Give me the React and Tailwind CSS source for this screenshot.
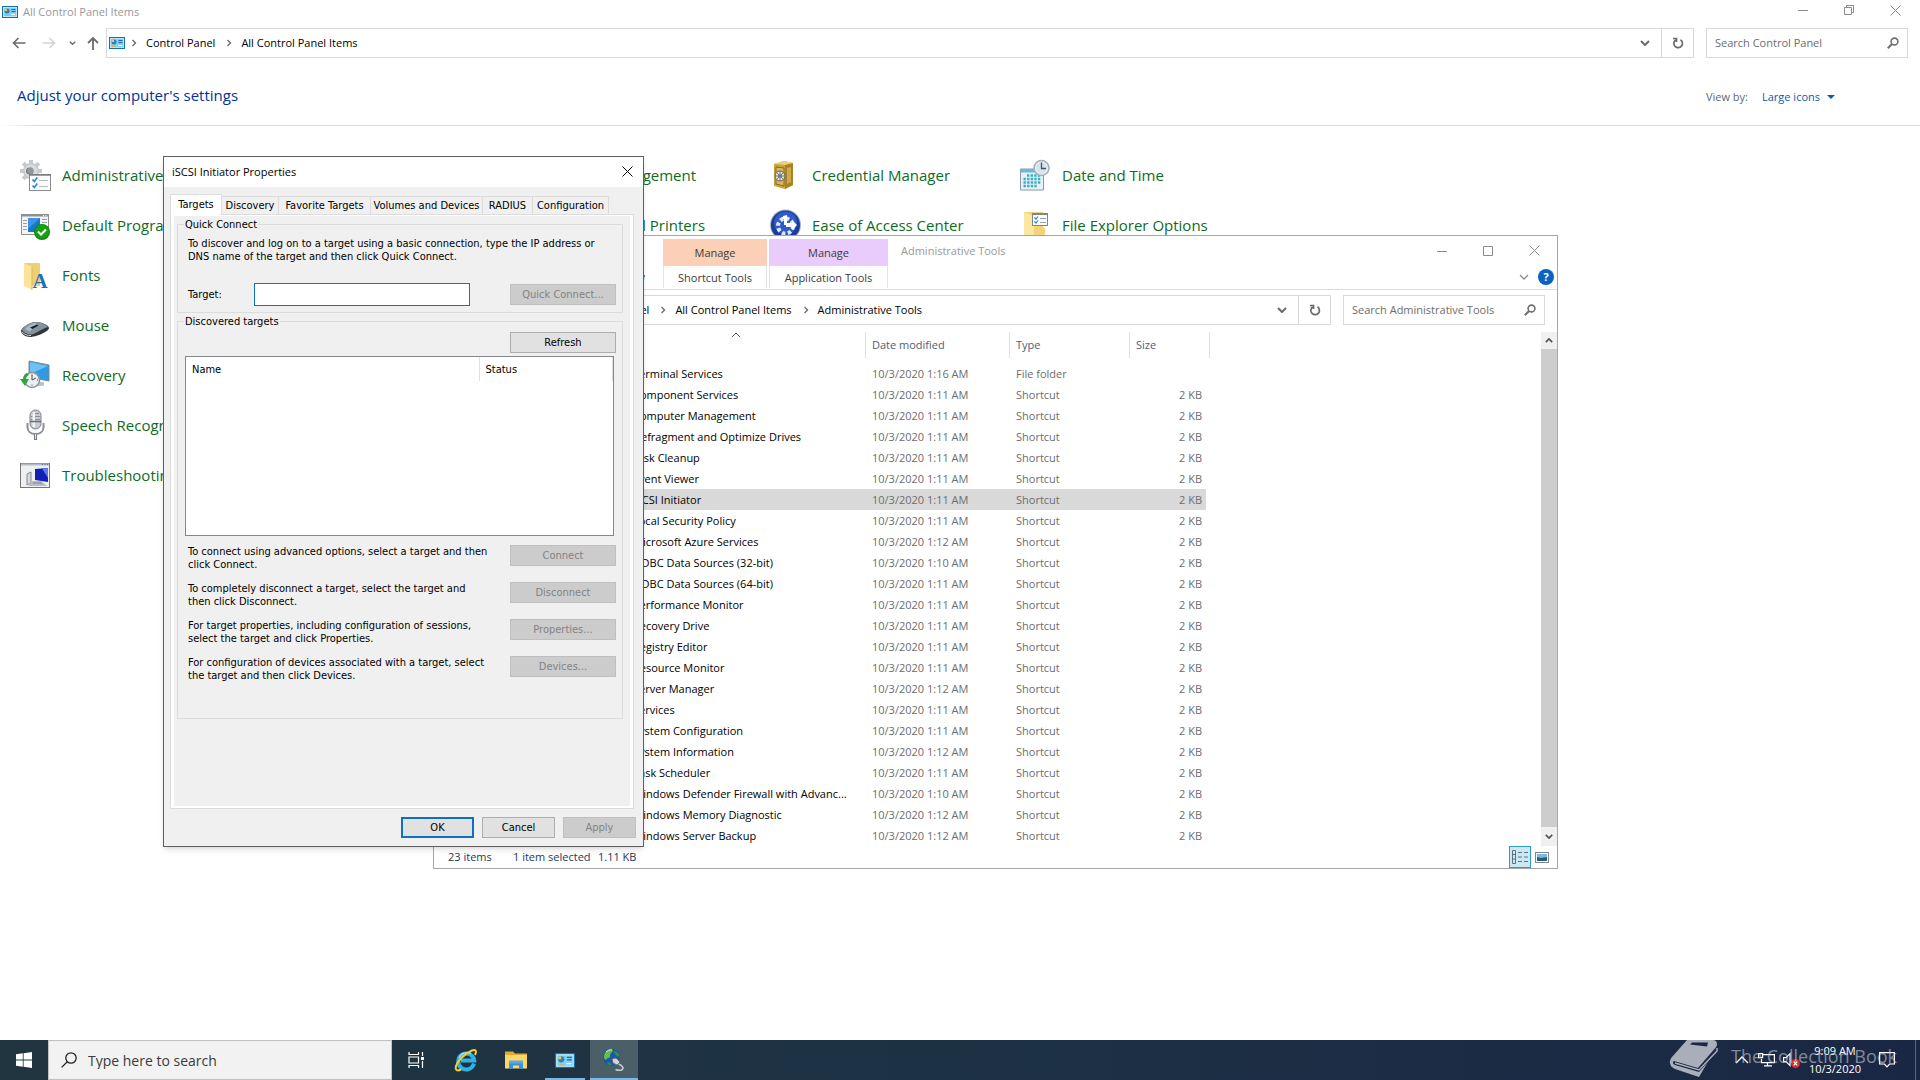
import { useState } from 'react';

const tools = [
  ['Terminal Services', '10/3/2020 1:16 AM', 'File folder', ''],
  ['Component Services', '10/3/2020 1:11 AM', 'Shortcut', '2 KB'],
  ['Computer Management', '10/3/2020 1:11 AM', 'Shortcut', '2 KB'],
  ['Defragment and Optimize Drives', '10/3/2020 1:11 AM', 'Shortcut', '2 KB'],
  ['Disk Cleanup', '10/3/2020 1:11 AM', 'Shortcut', '2 KB'],
  ['Event Viewer', '10/3/2020 1:11 AM', 'Shortcut', '2 KB'],
  ['iSCSI Initiator', '10/3/2020 1:11 AM', 'Shortcut', '2 KB'],
  ['Local Security Policy', '10/3/2020 1:11 AM', 'Shortcut', '2 KB'],
  ['Microsoft Azure Services', '10/3/2020 1:12 AM', 'Shortcut', '2 KB'],
  ['ODBC Data Sources (32-bit)', '10/3/2020 1:10 AM', 'Shortcut', '2 KB'],
  ['ODBC Data Sources (64-bit)', '10/3/2020 1:11 AM', 'Shortcut', '2 KB'],
  ['Performance Monitor', '10/3/2020 1:11 AM', 'Shortcut', '2 KB'],
  ['Recovery Drive', '10/3/2020 1:11 AM', 'Shortcut', '2 KB'],
  ['Registry Editor', '10/3/2020 1:11 AM', 'Shortcut', '2 KB'],
  ['Resource Monitor', '10/3/2020 1:11 AM', 'Shortcut', '2 KB'],
  ['Server Manager', '10/3/2020 1:12 AM', 'Shortcut', '2 KB'],
  ['Services', '10/3/2020 1:11 AM', 'Shortcut', '2 KB'],
  ['System Configuration', '10/3/2020 1:11 AM', 'Shortcut', '2 KB'],
  ['System Information', '10/3/2020 1:12 AM', 'Shortcut', '2 KB'],
  ['Task Scheduler', '10/3/2020 1:11 AM', 'Shortcut', '2 KB'],
  ['Windows Defender Firewall with Advanc...', '10/3/2020 1:10 AM', 'Shortcut', '2 KB'],
  ['Windows Memory Diagnostic', '10/3/2020 1:12 AM', 'Shortcut', '2 KB'],
  ['Windows Server Backup', '10/3/2020 1:12 AM', 'Shortcut', '2 KB'],
];

const actions = [
  ['To connect using advanced options, select a target and then', 'click Connect.', 'Connect'],
  ['To completely disconnect a target, select the target and', 'then click Disconnect.', 'Disconnect'],
  ['For target properties, including configuration of sessions,', 'select the target and click Properties.', 'Properties...'],
  ['For configuration of devices associated with a target, select', 'the target and then click Devices.', 'Devices...'],
];

/* ---------- small glyphs ---------- */

function PanelIcon({ className }) {
  return (
    <svg viewBox="0 0 16 12" className={className}>
      <rect x="0.5" y="0.5" width="15" height="11" fill="#7fd0f5" stroke="#1b6fa8" />
      <rect x="1.5" y="1.5" width="13" height="9" fill="none" stroke="#b9e6fb" />
      <circle cx="5" cy="5" r="2.5" fill="#2e7dbd" />
      <path d="M5 5V2.5A2.5 2.5 0 0 0 2.5 5z" fill="#f6c945" />
      <path d="M9.5 3.5h4M9.5 5.5h4" stroke="#1f66a0" />
      <path d="M3 9.5h4" stroke="#e9a33a" />
      <path d="M9 8.5h4" stroke="#fff" />
    </svg>
  );
}

function Crumb() {
  return (
    <svg viewBox="0 0 6 8" className="mx-[6px] h-2 w-[6px]" fill="none" stroke="#6b6b6b" strokeWidth="1.4">
      <path d="M1.5 1l3 3-3 3" />
    </svg>
  );
}

function Chevron({ className }) {
  return (
    <svg viewBox="0 0 10 6" className={className} fill="none" stroke="currentColor" strokeWidth="2">
      <path d="M1 1l4 4 4-4" />
    </svg>
  );
}

function MagnifierIcon() {
  return (
    <svg viewBox="0 0 12 12" className="h-3 w-3 shrink-0" fill="none" stroke="#707070">
      <circle cx="7.5" cy="4.5" r="3.4" strokeWidth="1.6" />
      <path d="M5 7L.8 11.2" strokeWidth="2" />
    </svg>
  );
}

function CloseGlyph() {
  return (
    <svg viewBox="0 0 11 11" className="h-[11px] w-[11px]" fill="none" stroke="currentColor">
      <path d="M.5.5l10 10M10.5.5l-10 10" />
    </svg>
  );
}

function WindowButtons({ restore }) {
  return (
    <div className="flex text-[#8c8c8c]">
      <button aria-label="Minimize" className="flex w-[46px] items-center justify-center">
        <svg viewBox="0 0 10 10" className="h-[10px] w-[10px]" stroke="currentColor"><path d="M0 5.5h10" /></svg>
      </button>
      <button aria-label="Maximize" className="flex w-[46px] items-center justify-center">
        <svg viewBox="0 0 10 10" className="h-[10px] w-[10px]" fill="none" stroke="currentColor">
          {restore ? <path d="M.5 2.5h7v7h-7zM2.5 2.5v-2h7v7h-2" /> : <path d="M.5.5h9v9h-9z" />}
        </svg>
      </button>
      <button aria-label="Close" className="flex w-[46px] items-center justify-center"><CloseGlyph /></button>
    </div>
  );
}

/* ---------- control panel icons ---------- */

function AdminToolsIcon() {
  return (
    <svg viewBox="0 0 32 32" className="h-8 w-8">
      <g fill="#c3c9ce">
        <circle cx="11" cy="12" r="8" />
        <g stroke="#c3c9ce" strokeWidth="4">
          <path d="M11 1v22M0 12h22M3.2 4.2l15.6 15.6M18.8 4.2L3.2 19.8" />
        </g>
      </g>
      <circle cx="11" cy="12" r="6.5" fill="#d8dcdf" />
      <circle cx="10" cy="12" r="3.8" fill="#8f979d" />
      <path d="M8 9a4 4 0 0 0 0 6" stroke="#6c7479" fill="none" />
      <rect x="9.5" y="15.5" width="21" height="16" fill="#fbfbfb" stroke="#8c8c8c" />
      <path d="M9 16h22" stroke="#777" strokeWidth="1.4" />
      <path d="M12.5 20.5l1.8 2 3-4M12.5 26.5l1.8 2 3-4" fill="none" stroke="#2a86d8" strokeWidth="1.6" />
      <path d="M19 21.5h9M19 27.5h9" stroke="#b5bcc2" />
    </svg>
  );
}

function DefaultProgramsIcon() {
  return (
    <svg viewBox="0 0 32 32" className="h-8 w-8">
      <rect x="1.5" y="5.5" width="27" height="20" fill="#f4f4f4" stroke="#8a9094" />
      <path d="M1 6.5h28" stroke="#8a9094" strokeWidth="2" />
      <path d="M23 6.5h1M25.5 6.5h1" stroke="#fff" />
      <path d="M3 11.5h4M3 14.5h4M3 17.5h4M3 20.5h4M22 10.5h5M22 13.5h5" stroke="#9aa0a4" />
      <rect x="8" y="9" width="12" height="14" fill="#1976d2" />
      <path d="M8 9h12L8 20z" fill="#3d94e6" />
      <circle cx="22" cy="23" r="8" fill="#11850f" />
      <circle cx="22" cy="22.5" r="7" fill="#17a012" />
      <path d="M18 22.5l3 3 5-5" fill="none" stroke="#fff" strokeWidth="2" />
    </svg>
  );
}

function FontsIcon() {
  return (
    <svg viewBox="0 0 32 32" className="h-8 w-8 overflow-visible">
      <path d="M4 4h15a1 1 0 0 1 1 1v22H7z" fill="#f0cf74" />
      <path d="M4 4l8 4v23l-8-4z" fill="#fbe39a" />
      <path d="M12 8v23" stroke="#dfb95c" />
      <text x="12.5" y="29" fontSize="21" fontWeight="700" fontFamily="Liberation Serif, serif" fill="#1f6fb5">A</text>
    </svg>
  );
}

function MouseIcon() {
  return (
    <svg viewBox="0 0 32 32" className="h-8 w-8">
      <path d="M1 22c0-3 9-9 15-9 5 0 13 3 13 6 0 4-14 9-19 9-4 0-9-3-9-6z" fill="#32373c" />
      <path d="M2 20.5c3-4 9-8 14-7.5 4 .3 11 2.5 12 5-5 1-11 6-16 7.5C8 25.5 3 23.5 2 20.5z" fill="#8593a1" />
      <path d="M5 20c3-3 7-5.5 10-6l3 2c-4 1.5-6 4-8 6.5z" fill="#aebac5" />
      <path d="M10 18.5l7-3 1.5 1-6 3.5z" fill="#1e2226" />
      <path d="M2 23c3 3 6 3.5 9 3.5" stroke="#cfd5da" fill="none" />
    </svg>
  );
}

function RecoveryIcon() {
  return (
    <svg viewBox="0 0 32 32" className="h-8 w-8">
      <path d="M9 2l20 4v16L9 18z" fill="#2f9be4" stroke="#7c8891" />
      <path d="M10 3l18 4-18 8z" fill="#6cc1f6" />
      <path d="M16 22l8 1.5v3l-8 1z" fill="#b8bfc4" />
      <circle cx="12" cy="21" r="7.5" fill="#eceff1" stroke="#8d969c" strokeWidth="1.6" />
      <path d="M12 16v5l4-2" stroke="#4a5257" fill="none" />
      <path d="M12 15.5v1M12 25.5v1M17 21h1" stroke="#4a5257" />
      <path d="M7 14c-3 1-4 4-4 6H0l5 7 4-7H6c0-2 1-3 3-4z" fill="#2fa63a" />
    </svg>
  );
}

function MicIcon() {
  return (
    <svg viewBox="0 0 32 32" className="h-8 w-8">
      <rect x="10" y="1" width="11" height="19" rx="5.5" fill="#c9ccd1" stroke="#7b7f87" />
      <path d="M12 4.5h7M11 7.5h9M11 10.5h9" stroke="#8b9098" />
      <rect x="12.5" y="3" width="2.5" height="15" fill="#f2f3f5" />
      <path d="M10 12.5h11" stroke="#666b73" strokeWidth="1.5" />
      <path d="M7.5 14v4c0 4.5 3.5 7 8 7s8-2.5 8-7v-4" fill="none" stroke="#8b9098" strokeWidth="2" />
      <path d="M15.5 25v6" stroke="#777c84" strokeWidth="3" />
      <path d="M15.5 25v5" stroke="#e1e3e6" />
    </svg>
  );
}

function TroubleshootIcon() {
  return (
    <svg viewBox="0 0 32 32" className="h-8 w-8">
      <rect x="0.5" y="4.5" width="29" height="24" fill="#eef0f2" stroke="#777" />
      <path d="M1 5.5h28" stroke="#b6bcc2" strokeWidth="2" />
      <path d="M22 5.5h1M24.5 5.5h1M27 5.5h1" stroke="#4c6fc0" />
      <path d="M15 10l13-1v14l-13-2z" fill="#1221b4" />
      <path d="M22 9.5l6-.5v10z" fill="#5f79e6" />
      <path d="M7 15l4-2v11l-4 2z" fill="#d8dade" stroke="#85898f" />
      <path d="M11 22h10l6 5H9z" fill="#b9bdc3" />
      <path d="M13 24h9" stroke="#7f848b" />
    </svg>
  );
}

function SafeIcon() {
  return (
    <svg viewBox="0 0 32 32" className="h-8 w-8">
      <path d="M4 5l10-3 9 2v22l-8 4-11-3z" fill="#c9a23c" />
      <path d="M15 5l8-1v22l-8 4z" fill="#a98228" />
      <path d="M4 5l10-3 9 2-8 2z" fill="#ecd07a" />
      <path d="M6 8l8 1v18l-8-2z" fill="#dcb955" stroke="#8e6a18" />
      <circle cx="10" cy="17" r="5" fill="#dfe1e2" stroke="#63604f" />
      <circle cx="10" cy="17" r="2" fill="#787c80" />
      <path d="M10 12v10M5 17h10M6.5 13.5l7 7M13.5 13.5l-7 7" stroke="#787c80" />
      <path d="M17 9l4-1v15l-4 2z" fill="#d0a94a" />
    </svg>
  );
}

function DateTimeIcon() {
  return (
    <svg viewBox="0 0 32 32" className="h-8 w-8">
      <path d="M.5 10h23v21h-23z" fill="#e8f1f5" stroke="#8a9aa5" />
      <path d="M.5 10h23v3.5H.5z" fill="#6fb7d6" />
      <g stroke="#34b1c9" strokeWidth="2.4" strokeDasharray="2.4 1.2">
        <path d="M7 16.5h14M3.5 20h18M3.500 23.500h18M3.500 27h14" />
      </g>
      <circle cx="21.500" cy="9" r="7.500" fill="#e9eff4" stroke="#a3afb9" strokeWidth="1.600" />
      <circle cx="21.500" cy="9" r="5.500" fill="#d6e2ec" />
      <path d="M21.500 3.500v6H26" stroke="#46535e" fill="none" strokeWidth="1.300" />
    </svg>
  );
}

function EaseIcon() {
  return (
    <svg viewBox="0 0 32 32" className="h-8 w-8">
      <circle cx="15.5" cy="16" r="15.5" fill="#a8afba" />
      <circle cx="15.5" cy="16" r="14.5" fill="#1d3b98" />
      <circle cx="15.5" cy="14" r="11.5" fill="#2f5bc9" />
      <circle cx="15.5" cy="17" r="7.5" fill="none" stroke="#dfe7f8" strokeWidth="4" strokeDasharray="3.5 2.4" />
      <path d="M17 16V6l-4 1v3h1v6z" fill="#fff" />
      <path d="M16 14h6v-3l5 5-5 5v-3h-6z" fill="#fff" />
    </svg>
  );
}

function FolderOptionsIcon() {
  return (
    <svg viewBox="0 0 32 32" className="h-8 w-8">
      <path d="M4 3h19v27H6z" fill="#f3d377" />
      <path d="M4 3l10 4v25L4 28z" fill="#fbe6a2" />
      <path d="M22 18c3 0 4 3 3 6l-1 8h-3z" fill="#f3d377" />
      <rect x="12.5" y="4.5" width="15" height="12" fill="#fbfbfb" stroke="#7f868c" />
      <path d="M12 5.5h16" stroke="#7f868c" />
      <path d="M14.5 8.5l1.5 1.5 2-2.5M14.5 12.5l1.5 1.5 2-2.5" stroke="#2a86d8" fill="none" strokeWidth="1.2" />
      <path d="M20 9.5h6M20 13.5h6" stroke="#9aa0a5" />
    </svg>
  );
}

const panelItems = [
  { label: 'Administrative Tools', icon: AdminToolsIcon, cell: 'col-start-1 row-start-1' },
  { label: 'Color Management', cell: 'col-start-3 row-start-1' },
  { label: 'Credential Manager', icon: SafeIcon, cell: 'col-start-4 row-start-1' },
  { label: 'Date and Time', icon: DateTimeIcon, cell: 'col-start-5 row-start-1' },
  { label: 'Default Programs', icon: DefaultProgramsIcon, cell: 'col-start-1 row-start-2' },
  { label: 'Devices and Printers', cell: 'col-start-3 row-start-2' },
  { label: 'Ease of Access Center', icon: EaseIcon, cell: 'col-start-4 row-start-2' },
  { label: 'File Explorer Options', icon: FolderOptionsIcon, cell: 'col-start-5 row-start-2' },
  { label: 'Fonts', icon: FontsIcon, cell: 'col-start-1 row-start-3' },
  { label: 'Mouse', icon: MouseIcon, cell: 'col-start-1 row-start-4' },
  { label: 'Recovery', icon: RecoveryIcon, cell: 'col-start-1 row-start-5' },
  { label: 'Speech Recognition', icon: MicIcon, cell: 'col-start-1 row-start-6' },
  { label: 'Troubleshooting', icon: TroubleshootIcon, cell: 'col-start-1 row-start-7' },
];

/* ---------- shared navigation bar ---------- */

function NavBar({ crumbs, placeholder }) {
  return (
    <div className="flex h-[30px] pr-3">
      <div className="flex w-[106px] shrink-0 items-center pl-3 text-[#6b6b6b]">
        <button aria-label="Back" className="w-[30px]">
          <svg viewBox="0 0 14 12" className="h-3 w-[14px]" fill="none" stroke="currentColor" strokeWidth="1.6"><path d="M13.5 6H1.5M6.5 1l-5 5 5 5" /></svg>
        </button>
        <button aria-label="Forward" className="w-[27px] text-[#d4d4d4]">
          <svg viewBox="0 0 14 12" className="h-3 w-[14px]" fill="none" stroke="currentColor" strokeWidth="1.6"><path d="M.5 6h12M7.5 1l5 5-5 5" /></svg>
        </button>
        <button aria-label="Recent locations" className="w-[18px]"><Chevron className="h-1 w-[7px]" /></button>
        <button aria-label="Up">
          <svg viewBox="0 0 12 14" className="h-[14px] w-3" fill="none" stroke="currentColor" strokeWidth="1.8"><path d="M6 14V2M1 7l5-5 5 5" /></svg>
        </button>
      </div>
      <nav className="flex flex-1 items-center border border-[#d9d9d9] text-[11px]">
        <PanelIcon className="ml-[2px] h-3 w-4" />
        <Crumb />
        {crumbs.map((c, i) => (
          <div key={c} className="flex items-center">
            {i > 0 && <Crumb />}
            <a href="#" className="whitespace-nowrap pl-[3px] pr-[5px] text-black">{c}</a>
          </div>
        ))}
        <button aria-label="Previous locations" className="ml-auto mr-[11px] text-[#6b6b6b]"><Chevron className="h-[6px] w-[10px]" /></button>
        <button aria-label="Refresh" className="flex w-8 items-center justify-center self-stretch border-l border-[#d9d9d9] text-[#6b6b6b]">
          <svg viewBox="0 0 12 12" className="h-3 w-3" fill="none" stroke="currentColor" strokeWidth="1.7">
            <path d="M8.5 2.8A4.3 4.3 0 1 1 3.5 3M1 1.5h3.5V5" />
          </svg>
        </button>
      </nav>
      <label className="ml-3 flex w-[202px] items-center border border-[#d9d9d9] px-2">
        <input type="text" placeholder={placeholder} aria-label={placeholder} className="min-w-0 flex-1 bg-transparent text-[11px] outline-none placeholder:text-[#6d6d6d]" />
        <MagnifierIcon />
      </label>
    </div>
  );
}

function ControlPanel() {
  return (
    <main className="flex-1">
      <header className="flex h-7 justify-between pl-[2px] pr-[2px]">
        <div className="flex h-[23px] items-center gap-[5px] text-[11px] text-[#999]">
          <PanelIcon className="h-3 w-4" />
          <span>All Control Panel Items</span>
        </div>
        <div className="flex h-5"><WindowButtons restore /></div>
      </header>
      <NavBar crumbs={['Control Panel', 'All Control Panel Items']} placeholder="Search Control Panel" />
      <div className="flex h-[67px] items-center justify-between pl-[17px] pr-[85px] pt-[10px]">
        <h1 className="pb-1 text-[15px] text-[#003399]">Adjust your computer's settings</h1>
        <div className="flex items-center text-[11px]">
          <label htmlFor="viewby" className="mr-[14px] text-[#5a6a7e]">View by:</label>
          <select id="viewby" className="appearance-none bg-transparent text-[#0a5ab4] outline-none">
            <option>Large icons</option>
          </select>
          <svg viewBox="0 0 8 4" className="ml-[6px] h-1 w-2" fill="#0a5ab4"><path d="M0 0h8L4 4z" /></svg>
        </div>
      </div>
      <div className="h-px bg-linear-to-r from-white via-[#d6dbe3] via-[2%] to-[#d6dbe3]" />
      <div className="grid auto-rows-[50px] grid-cols-[repeat(5,250px)] pl-5 pt-6">
        {panelItems.map(({ label, icon: Icon, cell }) => (
          <a key={label} href="#" className={'flex items-center gap-[10px] whitespace-nowrap text-[15px] text-[#0f6b1f] ' + cell}>
            {Icon ? <Icon /> : <span className="w-8" />}
            {label}
          </a>
        ))}
      </div>
    </main>
  );
}

function RibbonTab({ label, color, width }) {
  return (
    <div className={'mt-[3px] flex flex-col text-center text-[#3c3c3c] ' + width}>
      <div className={'flex h-[27px] items-center justify-center ' + color}>Manage</div>
      <button className="h-[22px] border-x border-[#e3e3e3] pt-[2px]">{label}</button>
    </div>
  );
}

function ExplorerWindow() {
  const [selected, setSelected] = useState('iSCSI Initiator');
  return (
    <section className="absolute left-[433px] top-[235px] w-[1125px] border border-[#a6a6a6] bg-white text-[11px]">
      <div className="flex h-[54px] gap-[2px] border-b border-[#dadbdc]">
        <div className="flex w-[227px] items-end justify-end pb-1 pr-4 text-[#3c3c3c]">View</div>
        <RibbonTab label="Shortcut Tools" color="bg-[#fccfb7]" width="w-[104px]" />
        <RibbonTab label="Application Tools" color="bg-[#e9cbfc]" width="w-[119px]" />
        <div className="ml-[11px] flex h-[30px] items-center text-[#999]">Administrative Tools</div>
        <div className="ml-auto flex flex-col items-end">
          <div className="flex h-[29px]"><WindowButtons /></div>
          <div className="flex h-6 items-center gap-[9px] pr-[3px] text-[#8c8c8c]">
            <button aria-label="Expand ribbon">
              <svg viewBox="0 0 10 6" className="h-[6px] w-[10px]" fill="none" stroke="currentColor" strokeWidth="1.3"><path d="M1 1l4 4 4-4" /></svg>
            </button>
            <button aria-label="Help" className="flex h-4 w-4 items-center justify-center rounded-full bg-[#0b61c4] font-bold text-white">?</button>
          </div>
        </div>
      </div>
      <div className="pt-[5px]">
        <NavBar crumbs={['Control Panel', 'All Control Panel Items', 'Administrative Tools']} placeholder="Search Administrative Tools" />
      </div>
      <div className="mt-[7px] flex justify-between">
        <table className="ml-[172px] w-[604px] table-fixed border-separate border-spacing-0">
          <colgroup>
            <col className="w-[260px]" />
            <col className="w-[144px]" />
            <col className="w-[120px]" />
            <col className="w-[80px]" />
          </colgroup>
          <thead className="text-left text-[#4c607a]">
            <tr className="h-[26px]">
              <th className="border-r border-[#e0e0e0] p-0 align-top font-normal">
                <svg viewBox="0 0 10 6" className="mx-auto h-[6px] w-[10px]" fill="none" stroke="#555"><path d="M1 5l4-4 4 4" /></svg>
              </th>
              <th className="border-r border-[#e0e0e0] px-[6px] py-0 font-normal">Date modified</th>
              <th className="border-r border-[#e0e0e0] px-[6px] py-0 font-normal">Type</th>
              <th className="border-r border-[#e0e0e0] px-[6px] py-0 font-normal">Size</th>
            </tr>
          </thead>
          <tbody className="text-[#6d6d6d]">
            <tr className="h-[5px]"><td className="p-0" /></tr>
            {tools.map(([name, date, type, size]) => {
              const bg = name === selected ? ' bg-[#d9d9d9]' : '';
              return (
                <tr key={name} onClick={() => setSelected(name)} className="h-[21px]">
                  <td className={'overflow-hidden whitespace-nowrap py-0 pl-[27px] pr-0 text-black' + bg}>{name}</td>
                  <td className={'whitespace-nowrap px-[6px] py-0' + bg}>{date}</td>
                  <td className={'px-[6px] py-0' + bg}>{type}</td>
                  <td className={'border-r-4 border-transparent bg-clip-padding py-0 pl-[6px] pr-1 text-right' + bg}>{size}</td>
                </tr>
              );
            })}
          </tbody>
        </table>
        <div className="flex w-4 flex-col bg-[#cdcdcd]">
          <button aria-label="Scroll up" className="flex h-[17px] rotate-180 items-center justify-center bg-[#f0f0f0] text-[#505050]"><Chevron className="h-[5px] w-2" /></button>
          <div className="flex-1" />
          <button aria-label="Scroll down" className="flex h-[19px] items-center justify-center bg-[#f0f0f0] text-[#505050]"><Chevron className="h-[5px] w-2" /></button>
        </div>
      </div>
      <footer className="flex h-[22px] items-center pl-[14px] pr-2 text-[#1e395b]">
        <span className="w-[65px]">23 items</span>
        <span className="w-[85px]">1 item selected</span>
        <span>1.11 KB</span>
        <button aria-label="Details view" className="ml-auto flex h-[22px] w-[22px] items-center justify-center border border-[#2d9cc8] bg-[#cce8f4]">
          <svg viewBox="0 0 16 14" className="h-[14px] w-4" fill="none" stroke="#5d7480">
            <path d="M.5.5h3v13h-3zM.5 4.5h3M.5 9h3M6 2.5h4M12 2.5h4M6 7h4M12 7h4M6 11.5h4M12 11.5h4" />
          </svg>
        </button>
        <button aria-label="Large icons view" className="ml-1">
          <svg viewBox="0 0 14 11" className="h-[11px] w-[14px]">
            <rect x="0.5" y="0.5" width="13" height="10" fill="#fff" stroke="#7d8790" />
            <path d="M2 2h10v4H2z" fill="#7fb7e3" />
            <path d="M2 5l4 1 6-1v4H2z" fill="#2d5d76" />
          </svg>
        </button>
      </footer>
    </section>
  );
}

function DialogButton({ children, disabled, primary, width }) {
  let look = 'border border-[#adadad] bg-[#e1e1e1] text-black';
  if (disabled) look = 'border border-[#bfbfbf] bg-[#cccccc] text-[#838383]';
  if (primary) look = 'border-2 border-[#0f6fc0] bg-[#e1e1e1] text-black';
  return (
    <button disabled={disabled} className={'flex h-[21px] shrink-0 items-center justify-center ' + width + ' ' + look}>
      {children}
    </button>
  );
}

const tabs = [
  ['Discovery', 'w-[57px]'],
  ['Favorite Targets', 'w-[92px]'],
  ['Volumes and Devices', 'w-[112px]'],
  ['RADIUS', 'w-[50px]'],
  ['Configuration', 'w-[76px]'],
];

function IscsiDialog() {
  const [target, setTarget] = useState('');
  return (
    <section role="dialog" aria-label="iSCSI Initiator Properties" className="absolute left-[163px] top-[156px] w-[481px] border border-[#5f5f5f] bg-[#f0f0f0] font-['DejaVu_Sans_Condensed','Open_Sans',sans-serif] text-[11px] leading-[13px] text-black shadow-md">
      <header className="flex h-[30px] items-center justify-between bg-white pb-[2px] pl-2 pr-[10px]">
        <h2 className="font-['Open_Sans',sans-serif]">iSCSI Initiator Properties</h2>
        <button aria-label="Close dialog"><CloseGlyph /></button>
      </header>
      <div className="pl-[6px] pr-[9px] pt-[7px]">
        <div role="tablist" className="flex items-end">
          <button role="tab" aria-selected="true" className="relative -mb-px h-[21px] w-[52px] border border-b-0 border-[#dcdcdc] bg-white pb-[2px]">Targets</button>
          {tabs.map(([label, width]) => (
            <button key={label} role="tab" className={'h-[18px] whitespace-nowrap border-r border-t border-[#dcdcdc] ' + width}>{label}</button>
          ))}
        </div>
        <div className="border border-[#dcdcdc] bg-white px-[3px] pb-[2px] pt-px">
          <div className="bg-[#f0f0f0] pb-[87px] pl-[3px] pr-[7px] pt-[2px]">
            <fieldset className="border border-[#dcdcdc] pb-[6px] pl-[10px] pr-[6px]">
              <legend className="-ml-1 px-px">Quick Connect</legend>
              <p className="whitespace-nowrap pt-[6px]">
                To discover and log on to a target using a basic connection, type the IP address or<br />
                DNS name of the target and then click Quick Connect.
              </p>
              <div className="mt-5 flex items-center">
                <label htmlFor="target" className="w-[66px]">Target:</label>
                <input id="target" type="text" value={target} onChange={e => setTarget(e.target.value)} className="h-[23px] w-[216px] border border-[#1272bd] bg-white px-1 outline-none" />
                <div className="ml-auto"><DialogButton disabled={!target} width="w-[106px]">Quick Connect...</DialogButton></div>
              </div>
            </fieldset>
            <fieldset className="mt-[2px] border border-[#dcdcdc] pb-9 pl-[10px] pr-[6px]">
              <legend className="-ml-1 px-px">Discovered targets</legend>
              <div className="flex justify-end pt-1"><DialogButton width="w-[106px]">Refresh</DialogButton></div>
              <div className="-ml-[3px] mr-[2px] mt-[3px] h-[180px] border border-[#828790] bg-white">
                <table className="w-full table-fixed">
                  <thead>
                    <tr className="h-6 text-left">
                      <th className="w-[293px] border-r border-[#e0e0e0] px-[6px] font-normal">Name</th>
                      <th className="border-r border-[#e0e0e0] px-[6px] font-normal">Status</th>
                    </tr>
                  </thead>
                </table>
              </div>
              <div className="mt-[9px] flex flex-col gap-[11px]">
                {actions.map(([first, second, button]) => (
                  <div key={button} className="flex items-start justify-between">
                    <p className="whitespace-nowrap">{first}<br />{second}</p>
                    <DialogButton disabled width="w-[106px]">{button}</DialogButton>
                  </div>
                ))}
              </div>
            </fieldset>
          </div>
        </div>
      </div>
      <div className="flex justify-end gap-2 pb-2 pr-[7px] pt-2">
        <DialogButton primary width="w-[73px]">OK</DialogButton>
        <DialogButton width="w-[73px]">Cancel</DialogButton>
        <DialogButton disabled width="w-[73px]">Apply</DialogButton>
      </div>
    </section>
  );
}

function Taskbar() {
  return (
    <footer className="relative flex h-10 bg-linear-to-r from-[#20353f] via-[#1d3145] to-[#1a2744] text-white">
      <button aria-label="Start" className="flex w-12 items-center justify-center">
        <svg viewBox="0 0 16 16" className="h-4 w-4" fill="#fff">
          <path d="M0 2.3l6.8-1v6.3H0zM7.6 1.2L16 0v7.6H7.6zM0 8.4h6.8v6.3L0 13.7zM7.6 8.4H16V16l-8.4-1.2z" />
        </svg>
      </button>
      <label className="flex w-[344px] items-center border border-[#c0c0c0] bg-[#f2f2f2] pl-3 text-[#3b3b3b]">
        <svg viewBox="0 0 16 16" className="h-4 w-4" fill="none" stroke="#222" strokeWidth="1.3">
          <circle cx="10" cy="6" r="5.2" />
          <path d="M6.3 9.7L.6 15.4" />
        </svg>
        <input type="text" placeholder="Type here to search" aria-label="Type here to search" className="ml-[11px] flex-1 bg-transparent pt-[2px] text-[14px] outline-none placeholder:text-[#3b3b3b]" />
      </label>
      <button aria-label="Task View" className="flex w-12 items-center justify-center">
        <svg viewBox="0 0 16 16" className="h-4 w-4" fill="none" stroke="#fff" strokeWidth="1.2">
          <path d="M1 0v2.5h9.5V0M1 16v-2.5h9.5V16M1 5h9.5v6H1zM14.5 0v4M14.5 9v7" />
          <path d="M13.5 5.5h2v2h-2z" fill="#fff" />
        </svg>
      </button>
      <button aria-label="Internet Explorer" className="flex w-[51px] items-center justify-center">
        <svg viewBox="0 0 24 24" className="h-6 w-6" fill="none">
          <path d="M20 15.5A8 8 0 1 1 20.2 12.5H7" stroke="#2fb0ea" strokeWidth="4" />
          <path d="M5 10a8 8 0 0 1 12-4" stroke="#9be1fb" strokeWidth="1.3" />
          <path d="M21 7c2-4 .5-6-3-4.5C12 5 4 12 2 18c-1 4 1 5.5 5 3.5" stroke="#f7cf2f" strokeWidth="2" />
        </svg>
      </button>
      <button aria-label="File Explorer" className="flex w-[50px] items-center justify-center">
        <svg viewBox="0 0 22 20" className="h-5 w-[22px]">
          <path d="M0 1.5h8l2 2h12V18H0z" fill="#e5a92d" />
          <path d="M0 5h22v13.5H0z" fill="#fbd669" />
          <path d="M4 19v-6.5h14V19h-4v-3.5H8V19z" fill="#3b8fd4" />
          <path d="M4 10.5h14v3H4z" fill="#5aaae6" />
        </svg>
      </button>
      <button aria-label="Control Panel" className="relative flex w-12 items-center justify-center">
        <PanelIcon className="h-[15px] w-5" />
        <span className="absolute inset-x-1 bottom-0 h-[2px] bg-[#76b9ed]" />
      </button>
      <button aria-label="iSCSI Initiator" className="relative ml-[1px] flex w-12 items-center justify-center bg-[#4b5f69]">
        <svg viewBox="0 0 24 24" className="h-6 w-6">
          <circle cx="9.5" cy="9.5" r="8.5" fill="#1d57a8" />
          <path d="M3 5c2-3 6-4.500 8-3-1 3-3 3-3 6s-3 1-4 4C1.500 11 1.500 8 3 5z" fill="#5fc04a" />
          <path d="M12 3c3 .5 5 3 5.500 6-2 0-5-3-5.500-6z" fill="#2f9a3a" />
          <path d="M5 15c2-1 4 0 4 2.500C7.500 17.500 6 16.500 5 15z" fill="#2f9a3a" />
          <path d="M4 4c2-2 4-2.500 6-2" stroke="#d8f2ff" fill="none" />
          <path d="M10 11l4-1 4 4-3 3-4-2z" fill="#d4d7da" stroke="#666c72" />
          <path d="M16.500 16c4 1.500 6 4 3 6-2 1-4-.5-6 0" stroke="#c6cacd" strokeWidth="1.600" fill="none" />
        </svg>
        <span className="absolute inset-x-0 bottom-0 h-[2px] bg-[#76b9ed]" />
      </button>

      <div className="ml-auto flex items-center">
        <button aria-label="Show hidden icons" className="mr-[9px]">
          <svg viewBox="0 0 14 8" className="h-2 w-[14px]" fill="none" stroke="#fff" strokeWidth="1.4"><path d="M1 7l6-6 6 6" /></svg>
        </button>
        <svg viewBox="0 0 17 14" className="mr-2 h-[14px] w-[17px]" fill="none" stroke="#fff" strokeWidth="1.2">
          <path d="M5 1.6h11.4v8H3.5V6M9.5 9.6v3M6 12.8h8M.6.6h4v4h-4z" />
        </svg>
        <svg viewBox="0 0 18 16" className="h-4 w-[18px]">
          <path d="M.6 5.6h2.5L7 1.6v12l-3.9-4H.6z" fill="none" stroke="#fff" strokeWidth="1.2" />
          <circle cx="12.5" cy="11.5" r="4.5" fill="#e02b2b" />
          <path d="M10.7 9.7l3.6 3.6M14.3 9.7l-3.6 3.6" stroke="#fff" strokeWidth="1.2" />
        </svg>
        <div className="ml-[5px] w-[58px] text-center text-[11px] leading-[18px]">
          <div>9:09 AM</div>
          <div>10/3/2020</div>
        </div>
        <button aria-label="Notifications" className="ml-[15px] mr-5">
          <svg viewBox="0 0 16 16" className="h-4 w-4" fill="none" stroke="#fff" strokeWidth="1.2"><path d="M.6.6h14.8v11.4H10.5L8 14.8 5.5 12H.6z" /></svg>
        </button>
      </div>

      <div className="pointer-events-none absolute right-[23px] top-0 flex h-10 items-center gap-3 overflow-hidden text-[18px] text-[#c9cfd8]/60">
        <svg viewBox="0 0 50 40" className="h-10 w-[50px]">
          <path d="M18 0h26c4 0 5 4 3 8L30 37 6 29C1 27-1 22 3 17z" fill="#a9afba" />
          <path d="M23 2.5h16l-1 4-17-2z" fill="#1a2744" />
          <path d="M48 6v6L30 32 6 25c-2-1-3-3-1-4l24 7z" fill="#1a2744" />
          <path d="M48 8v3L30 30 6 23" fill="none" stroke="#a9afba" strokeWidth="1.5" />
        </svg>
        <span className="pb-2">The Collection Book</span>
      </div>
      <div className="w-px bg-[#5b6680]" />
      <div className="w-1" />
    </footer>
  );
}

export default function App() {
  return (
    <div className="relative flex min-h-screen flex-col overflow-hidden bg-white font-['Open_Sans',sans-serif] leading-4">
      <ControlPanel />
      <ExplorerWindow />
      <IscsiDialog />
      <Taskbar />
    </div>
  );
}
